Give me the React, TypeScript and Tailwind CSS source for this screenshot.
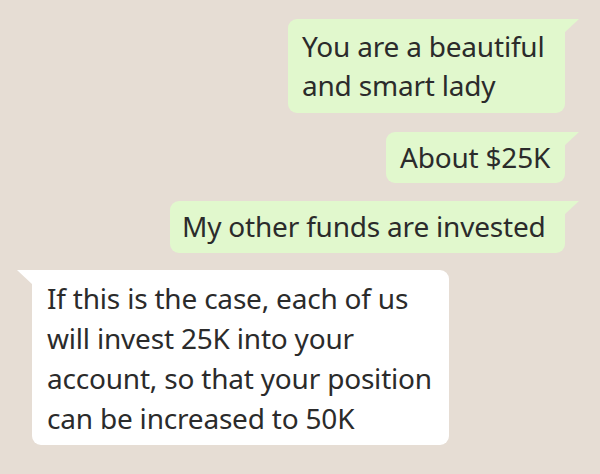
import React from "react";

function Out({ children, w, cls }: { children: React.ReactNode; w: string; cls: string }) {
  return (
    <div className={`relative ${w} ${cls} bg-[#e1f8cd] rounded-[9px] rounded-tr-none`}>
      <svg className="absolute top-0 right-[-14px]" width="15" height="14" viewBox="0 0 15 14">
        <path d="M0 0 L15 0 L0 14 Z" fill="#e1f8cd" />
      </svg>
      {children}
    </div>
  );
}

export default function App() {
  return (
    <div
      className="w-[600px] h-[474px] bg-[#e6ddd4] overflow-hidden flex flex-col pt-[19px] text-[28px] leading-[39px] tracking-[-0.2px] text-[#2b2b2b]"
      style={{ fontFamily: '"Noto Sans", sans-serif' }}
    >
      <div className="flex flex-col items-end pr-[35px] gap-[18px]">
        <Out w="w-[277px] mb-[1px]" cls="pl-[14px] pt-[8px] pb-[8px]">
          You are a beautiful
          <br />
          and smart lady
        </Out>
        <Out w="w-[179px]" cls="pl-[14px] pt-[6px] pb-[6px]">
          About $25K
        </Out>
        <Out w="w-[395px]" cls="pl-[12px] pt-[6px] pb-[7px]">
          My other funds are invested
        </Out>
      </div>
      <div className="flex pl-[32px] mt-[17px]">
        <div className="relative w-[417px] bg-white rounded-[9px] rounded-tl-none pl-[15px] pt-[8px] pb-[7px] leading-[40px]">
          <svg className="absolute top-0 left-[-15px]" width="16" height="15" viewBox="0 0 16 15">
            <path d="M0 0 L16 0 L16 15 Z" fill="#ffffff" />
          </svg>
          If this is the case, each of us
          <br />
          will invest 25K into your
          <br />
          account, so that your position
          <br />
          can be increased to 50K
        </div>
      </div>
    </div>
  );
}
